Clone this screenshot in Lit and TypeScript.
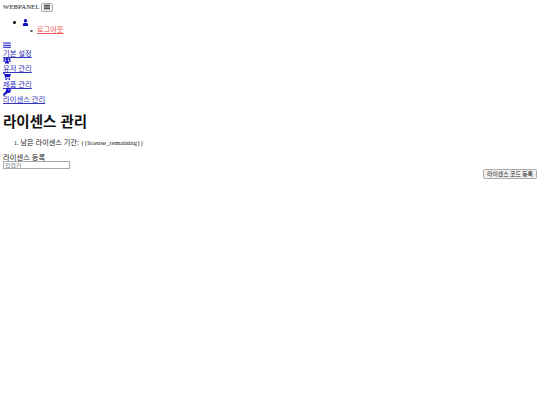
import { LitElement, html, css, svg } from "lit";
import { customElement } from "lit/decorators.js";

const icons = {
  user: svg`<path d="M4 4a2 2 0 1 0 0-4 2 2 0 0 0 0 4zM1 8V6.300C1 5.300 1.800 4.600 2.800 4.600h2.400c1 0 1.800.7 1.800 1.700V8z"/>`,
  sliders: svg`<path d="M0 .6h8v1H0zM0 2.800h8v1H0zM0 5h8v1H0z"/>`,
  users: svg`<path d="M4 4a1.500 1.500 0 1 0 0-3 1.500 1.500 0 0 0 0 3zM1.400 3a1 1 0 1 0 0-2 1 1 0 0 0 0 2zM6.600 3a1 1 0 1 0 0-2 1 1 0 0 0 0 2zM2 6.800V5.600c0-.8.6-1.400 1.400-1.400h1.200C5.400 4.200 6 4.800 6 5.600v1.200zM0 5V4.200C0 3.600.4 3.300 1 3.300h.8c.2.300.5.600.8.800C2 4.300 1.700 4.600 1.500 5zM8 5V4.200C8 3.600 7.600 3.300 7 3.300h-.8c-.2.300-.5.600-.8.800.6.200.9.500 1.100.900z"/>`,
  cart: svg`<path d="M0 0h1.500l.3 1H8L7 4.300H2.800l.2.800h4v.7H2.400L1 .7H0z"/><circle cx="3" cy="6.700" r=".8"/><circle cx="6.400" cy="6.700" r=".8"/>`,
  key: svg`<path d="M5.400 0a2.600 2.600 0 0 0-2.500 3.300L0 6.200V8h1.800V7h1V6h1l.9-.9A2.600 2.600 0 1 0 5.400 0zm.7 1.300a.6.600 0 1 1 0 1.200.6.600 0 0 1 0-1.200z"/>`,
  bars: svg`<path d="M0 1h8v1.200H0zM0 3.400h8v1.200H0zM0 5.800h8V7H0z"/>`,
};

const menu: [keyof typeof icons, string][] = [
  ["sliders", "기본 설정"],
  ["users", "유저 관리"],
  ["cart", "제품 관리"],
  ["key", "라이센스 관리"],
];

@customElement("app-root")
export class AppRoot extends LitElement {
  static styles = css`
    :host {
      display: block;
      padding: 3px;
      min-height: 399px;
      background: #fff;
      color: #222;
      font: 6.800px/7.750px "Liberation Serif", "Noto Sans CJK KR", serif;
    }
    .ko { font-size: 7.200px; }
    .brand {
      display: flex;
      align-items: center;
      gap: 2px;
      height: 8px;
    }
    .toggle {
      width: 12px;
      height: 9px;
      padding: 0;
      display: flex;
      align-items: center;
      justify-content: center;
      background: #efefef;
      border: 1px solid #aaa;
      border-radius: 1.500px;
      box-sizing: border-box;
    }
    .toggle svg { width: 6px; height: 6px; fill: #222; }
    ul { margin: 0; padding: 0; list-style: none; }
    .user-list { margin: 8px 0 7px; padding-left: 10px; }
    .user-row { display: flex; align-items: center; gap: 6.500px; }
    .dot {
      width: 2.500px;
      height: 2.500px;
      border-radius: 50%;
      background: #222;
      flex: none;
    }
    .sub { display: flex; align-items: center; gap: 4.500px; padding-left: 17px; padding-top: 1px; }
    .ring {
      width: 2.500px;
      height: 2.500px;
      border-radius: 50%;
      border: 0.500px solid #555;
      box-sizing: border-box;
      flex: none;
    }
    .user-row svg { width: 7px; height: 7px; fill: #11c; }
    .logout { color: #e55; text-decoration: underline; font-size: 7.200px; }
    .nav a {
      display: block;
      color: #33b;
      text-decoration: underline;
      font-size: 7.300px;
    }
    .nav svg { width: 8px; height: 7.750px; fill: #11c; display: block; }
    h1 {
      margin: 9px 0 0;
      color: #111;
      font: 700 14.500px/19px "Liberation Sans", "Noto Sans CJK KR", sans-serif;
    }
    ol { margin: 7px 0 6px; padding-left: 17.500px; }
    .field { display: block; font-size: 7.300px; }
    .field input {
      display: block;
      width: 67px;
      height: 8px;
      box-sizing: border-box;
      margin: 0;
      padding: 0 1px;
      border: 1px solid #aaa;
      font: 6px "Noto Sans CJK KR", sans-serif;
    }
    .actions { display: flex; justify-content: flex-end; }
    .actions button {
      height: 10px;
      padding: 0 3px;
      background: #efefef;
      border: 1px solid #aaa;
      border-radius: 1.500px;
      font: 5.900px/8px "Noto Sans CJK KR", sans-serif;
      color: #222;
    }
  `;

  render() {
    return html`
      <div class="brand">
        <span>WEBPANEL</span>
        <button class="toggle" aria-label="메뉴"><svg viewBox="0 0 8 8">${icons.bars}</svg></button>
      </div>
      <ul class="user-list">
        <li>
          <div class="user-row"><span class="dot"></span><svg viewBox="0 0 8 8">${icons.user}</svg></div>
          <ul><li class="sub"><span class="ring"></span><a class="logout">로그아웃</a></li></ul>
        </li>
      </ul>
      <div class="nav">
        ${menu.map(([icon, label]) => html`<a><svg viewBox="0 0 8 8">${icons[icon]}</svg>${label}</a>`)}
      </div>
      <h1>라이센스 관리</h1>
      <ol><li><span class="ko">남은 라이센스 기간:</span> {{license_remaining}}</li></ol>
      <label class="field">라이센스 등록<input placeholder="입력칸" /></label>
      <div class="actions"><button>라이센스 코드 등록</button></div>
    `;
  }
}
